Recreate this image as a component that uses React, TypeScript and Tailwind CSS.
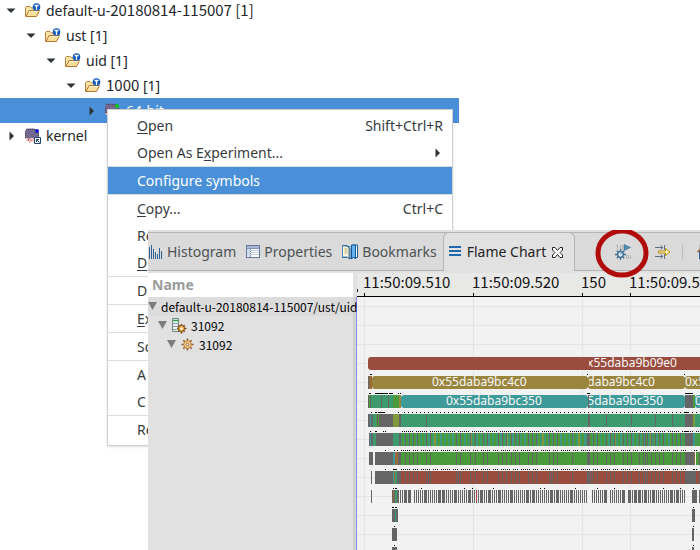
import type { ReactNode } from "react";

const GRAY = "#656565";
const RED = "#9a4d3f";
const OLIVE = "#9a853f";
const TEAL = "#3d9a99";
const GREEN = "#3d9a6d";
const LEAF = "#4a9a3b";
const LIME = "#7f9a3c";
const BROWN = "#9a6c3c";

type Span = [number, number, string];

function TraceFolderIcon() {
  return (
    <svg className="h-4 w-4 shrink-0" viewBox="0 0 16 16" aria-hidden="true">
      <path d="M.5 13.500V4.500l1-1h3.500l1.500 1.500h5v3" fill="#fbe5a8" stroke="#b9803a" />
      <path d="M1 13.500 4 7.500h10.500l-3 6z" fill="#fbdf9c" stroke="#b27830" strokeLinejoin="round" />
      <path d="M4.500 8.500h9" stroke="#fff3cf" />
      <circle cx="11.500" cy="4" r="3.800" fill="#1259bd" />
      <path d="M9.500 2.500h4M11.500 2.500v4.500" stroke="#fff" strokeWidth="1.300" />
    </svg>
  );
}

function TraceIcon({ dot, link }: { dot: string; link?: boolean }) {
  return (
    <svg className="h-4 w-4 shrink-0" viewBox="0 0 16 16" aria-hidden="true">
      <path d="M0 3 2 .5h7l3.500 2 1.500 3v4l-3 1.500-2-1-1 1.500-2.500-1L2 11 0 9z" fill="#75688f" />
      <path d="M1 1.500h10M.5 5v5M13.500 5v5" stroke="#4a4258" strokeDasharray="1 1" />
      <path d="M0 10h3v1h2v-1h4v4H8v-1H6v2H4v-2H2z" fill="#efb9b4" />
      <path d="M3 11h1v2H3zM6 12h1v1H6z" fill="#a05a60" />
      <circle cx="12" cy="3" r="2" fill={dot} />
      {link && (
        <>
          <path d="M9.500 9.500h6v6h-6z" fill="#fff" stroke="#1d4372" />
          <path d="M11.500 14v-2.500H14M11.500 11.500l3 3" stroke="#1d4372" fill="none" />
        </>
      )}
    </svg>
  );
}

function Arrow({ open }: { open?: boolean }) {
  return (
    <svg className="h-3 w-3 shrink-0" viewBox="0 0 12 12" aria-hidden="true">
      <path d={open ? "M1.500 3.500h9L6 8z" : "M4.500 1.500v9L9 6z"} fill="#2e3436" />
    </svg>
  );
}

function Num({ children }: { children: string }) {
  return <span className="font-['Noto_Sans_CJK_SC',sans-serif] text-[15px]">{children}</span>;
}

function TreeRow({ indent, open, selected, icon, children }: { indent: string; open?: boolean; selected?: boolean; icon: ReactNode; children: ReactNode }) {
  return (
    <li
      role="treeitem"
      aria-expanded={!!open}
      className={`flex h-[25px] w-[459px] items-center whitespace-pre ${indent} ${selected ? "bg-[#4a90d9] text-white" : ""}`}
    >
      <Arrow open={open} />
      <span className="ml-2 mr-[5px] flex">{icon}</span>
      <span>{children}</span>
    </li>
  );
}

function MenuItem({ children, shortcut, active, submenu }: { children: ReactNode; shortcut?: string; active?: boolean; submenu?: boolean }) {
  return (
    <button
      role="menuitem"
      type="button"
      className={`flex h-[27px] w-full items-center justify-between pl-[29px] pr-[9px] text-left whitespace-pre ${active ? "bg-[#4a90d9] text-white" : ""}`}
    >
      <span>{children}</span>
      {shortcut && <span>{shortcut}</span>}
      {submenu && <Arrow />}
    </button>
  );
}

function Key({ children }: { children: string }) {
  return <span className="underline decoration-1 underline-offset-2">{children}</span>;
}

function Separator() {
  return <div role="separator" className="h-px bg-[#dcdcdc]" />;
}

function ContextMenu() {
  return (
    <div role="menu" className="absolute left-[107px] top-[109px] w-[346px] border border-[#cfcfcf] bg-white py-[2px] text-[#363c3e] shadow-sm">
      <MenuItem shortcut="Shift+Ctrl+R"><Key>O</Key>pen</MenuItem>
      <MenuItem submenu>Open As E<Key>x</Key>periment...</MenuItem>
      <Separator />
      <MenuItem active>Configure symbols</MenuItem>
      <Separator />
      <MenuItem shortcut="Ctrl+C"><Key>C</Key>opy...</MenuItem>
      <MenuItem>Re</MenuItem>
      <MenuItem><Key>D</Key></MenuItem>
      <Separator />
      <MenuItem>D</MenuItem>
      <Separator />
      <MenuItem><Key>E</Key>x</MenuItem>
      <Separator />
      <MenuItem>So</MenuItem>
      <Separator />
      <MenuItem>A</MenuItem>
      <MenuItem>C</MenuItem>
      <Separator />
      <MenuItem>Re</MenuItem>
    </div>
  );
}

function HistogramIcon() {
  return (
    <svg className="h-4 w-[15px] shrink-0" viewBox="0 0 15 16" shapeRendering="crispEdges" aria-hidden="true">
      <path d="M1.500 3v12M3.500 1v14M5.500 5v10M7.500 8v7M9.500 10v5M11.500 4v11M13.500 7v8" stroke="#2c5f94" />
    </svg>
  );
}

function PropertiesIcon() {
  return (
    <svg className="h-[14px] w-[14px] shrink-0" viewBox="0 0 14 14" shapeRendering="crispEdges" aria-hidden="true">
      <path d="M.5 .5h13v12H.5z" fill="#fff" stroke="#64779f" />
      <path d="M1 1h12v2H1z" fill="#a9b8d8" />
      <path d="M1 3h4v9H1z" fill="#dfe6f3" />
      <path d="M1 3.500h12M4.500 3v9" stroke="#8295bd" />
      <path d="M1 5.500h12M1 7.500h12M1 9.500h12" stroke="#c3cde2" />
    </svg>
  );
}

function BookmarksIcon() {
  return (
    <svg className="h-4 w-4 shrink-0" viewBox="0 0 16 16" aria-hidden="true">
      <path d="M.5 1.500h4.500l3 2 2.500-2.500h5v12.500H10l-2 1.500-2-1.500H.5z" fill="#fff" stroke="#1e5b8f" />
      <path d="M.5 2v11h5l1.500 1.500V4L5 2z" fill="#fdf7df" stroke="#4d87b2" />
      <path d="M2.500 5h3M2.500 7h3M2.500 9h3" stroke="#b9a868" />
      <path d="M9.500 1h4v14l-2-2-2 2z" fill="#61b5f3" stroke="#12589c" />
      <path d="M8 4v11" stroke="#12466f" />
    </svg>
  );
}

function CloseIcon() {
  return (
    <svg className="h-[11px] w-[11px] shrink-0" viewBox="0 0 11 11" aria-hidden="true">
      <path d="M.5.5h2.500l2.500 3 2.500-3h2.500v2.500L8 5.500l2.500 2.500v2.500H8l-2.500-3-2.500 3H.5V8L3 5.500.5 3z" fill="#fff" stroke="#222" />
    </svg>
  );
}

function SymbolsIcon() {
  return (
    <svg className="h-4 w-4" viewBox="0 0 16 16" aria-hidden="true">
      <path d="M1 1.500h1.500v4M5.500 1.500h2v4h-2zM11.500 11.500h2v3h-2zM15.500 11v4" fill="none" stroke="#b4b4b4" />
      <path d="M9 .5v6L15.500 3.500z" fill="#4d8bb0" stroke="#2a6288" strokeWidth=".5" />
      <path d="M5.500 5v11M0 10.500h11M1.800 6.800l7.400 7.400M9.200 6.800l-7.400 7.400" stroke="#3d6c90" strokeWidth="1.300" />
      <circle cx="5.500" cy="10.500" r="2.800" fill="#d8ecf6" stroke="#3d6c90" strokeWidth="1.300" />
      <path d="m5.500 10.500 2-2" stroke="#4a90b8" />
    </svg>
  );
}

function AlignIcon() {
  return (
    <svg className="h-4 w-4" viewBox="0 0 16 16" aria-hidden="true">
      <path d="M0 3.500h8M5.500 1.500l2.500 2-2.500 2M9.500 1v5M0 12.500h8M5.500 10.500l2.500 2-2.500 2M9.500 10v5" stroke="#5b7389" fill="none" />
      <path d="M3.500 7h7V4.500L15 8l-4.500 3.500V9h-7z" fill="#fff0b0" stroke="#c08d15" />
    </svg>
  );
}

function HomeIcon() {
  return (
    <svg className="h-4 w-4" viewBox="0 0 16 16" aria-hidden="true">
      <path d="M2.500 7v8h11V7L8 2z" fill="#e6f0fa" stroke="#315f96" />
      <path d="M.5 8 8 1l7.500 7M3.500 5V1" fill="none" stroke="#a55b2b" strokeWidth="1.500" />
    </svg>
  );
}

function GearIcon() {
  return (
    <svg className="h-[13px] w-[13px] shrink-0" viewBox="0 0 13 13" aria-hidden="true">
      <path d="M6.500.5v12M.5 6.500h12M2.300 2.300l8.400 8.400M10.700 2.300l-8.400 8.400" stroke="#94592d" strokeWidth="1.600" />
      <circle cx="6.500" cy="6.500" r="3.800" fill="#f8d88c" stroke="#b87937" />
      <circle cx="6.500" cy="6.500" r="1.500" fill="#fff" stroke="#94592d" />
    </svg>
  );
}

function ProcessIcon() {
  return (
    <svg className="h-4 w-4 shrink-0" viewBox="0 0 16 16" aria-hidden="true">
      <path d="M1.500.5h6v13h-6z" fill="#eef4ee" stroke="#718879" />
      <path d="M2 2.500h5" stroke="#27a34b" strokeWidth="1.500" />
      <path d="M2 5.500h5M2 8.500h5M2 11.500h4" stroke="#8397b5" />
      <path d="M10.500 6v9.500M6 10.500h9.500M7.300 7.300l6.400 6.400M13.700 7.300l-6.400 6.400" stroke="#744414" strokeWidth="1.600" />
      <circle cx="10.500" cy="10.500" r="3" fill="#f3b13b" stroke="#84501b" />
      <circle cx="10.500" cy="10.500" r="1.200" fill="#fff" />
    </svg>
  );
}

function Tab({ icon, children }: { icon: ReactNode; children: ReactNode }) {
  return (
    <button role="tab" type="button" className="flex items-center gap-1 border-b border-[#b4b4b4] text-[#4c5254]">
      {icon}
      {children}
    </button>
  );
}

function TabBar() {
  return (
    <div className="flex h-[39px] border-t border-[#b4b4b4] bg-[#dadada]">
      <div role="tablist" className="flex">
        <Tab icon={<HistogramIcon />}>Histogram</Tab>
        <span className="w-[10px] border-b border-[#b4b4b4]" />
        <Tab icon={<PropertiesIcon />}>Properties</Tab>
        <span className="w-[10px] border-b border-[#b4b4b4]" />
        <Tab icon={<BookmarksIcon />}>Bookmarks</Tab>
        <span className="w-[6px] border-b border-[#b4b4b4]" />
        <button role="tab" aria-selected="true" type="button" className="-mt-px flex w-[132px] items-center rounded-t-md border border-b-0 border-[#b4b4b4] bg-[#e1e1e1] pl-[5px] text-[#1f2324]">
          <svg className="h-3 w-3 shrink-0" viewBox="0 0 12 12" shapeRendering="crispEdges" aria-hidden="true">
            <path d="M0 0h12v2H0zM0 4h12v2H0zM0 8h12v2H0z" fill="#1f68ab" />
          </svg>
          <span className="ml-[6px] mr-[6px] whitespace-pre">Flame Chart</span>
          <CloseIcon />
        </button>
      </div>
      <div className="flex grow items-center overflow-hidden border-b border-[#b4b4b4] pl-10">
        <button type="button" aria-label="Configure how the addresses are mapped to function names" className="shrink-0"><SymbolsIcon /></button>
        <button type="button" aria-label="Align views" className="ml-6 shrink-0"><AlignIcon /></button>
        <span className="ml-[11px] h-4 w-px shrink-0 bg-[#bcbcbc]" />
        <button type="button" aria-label="Reset the time scale" className="ml-[14px] shrink-0"><HomeIcon /></button>
      </div>
    </div>
  );
}

function SmallArrow() {
  return (
    <svg className="h-[9px] w-[9px] shrink-0" viewBox="0 0 9 9" aria-hidden="true">
      <path d="M0 0h9L4.500 8z" fill="#7d7d7d" />
    </svg>
  );
}

function EntryTree() {
  return (
    <div className="flex w-[205px] shrink-0 flex-col">
      <div className="h-6 bg-white pl-1 font-bold leading-6 text-[#9a9c9c]">Name</div>
      <ul role="tree" className="relative z-10 grow bg-[#e1e1e1] font-['Noto_Sans_CJK_SC',sans-serif] text-[12px] leading-[18px] whitespace-pre text-black">
        <li role="treeitem" className="flex h-[19px] items-center gap-1 bg-[#dcdcdc]"><SmallArrow />default-u-20180814-115007/ust/uid</li>
        <li role="treeitem" className="flex h-[19px] items-center gap-1 pl-[10px]"><SmallArrow /><ProcessIcon />31092</li>
        <li role="treeitem" className="flex h-[19px] items-center gap-[5px] pl-[19px]"><SmallArrow /><GearIcon />31092</li>
      </ul>
    </div>
  );
}

const TICKS = [364, 473, 582, 630];
const TICK_LABELS = ["11:50:09.510", "11:50:09.520", "150", "11:50:09.5"];
const GRID_ROWS = Array.from({ length: 13 }, (_, i) => 306 + i * 19);

const CALLS = [405, 409, 413, 417, 426, 430, 456, 460, 470, 475, 483, 487, 498, 502, 506, 511, 515, 519, 528, 532, 536, 549, 553, 557, 572, 593, 597, 606, 610, 614, 623, 627, 631, 639, 643, 645, 647, 651, 655, 659, 663, 672, 676, 680];
const callSpans: Span[] = CALLS.map((x): Span => [x, 1, GRAY]);

const striped: Span[] = [];
for (let x = 402; x < 685; x += 4) {
  if (x > 584 && x < 590) continue;
  striped.push([x, 2, x % 36 < 4 ? LIME : LEAF]);
  if (x % 12 === 6) striped.push([x + 2, 2, "#3d9a85"]);
}

const fine: Span[] = [];
for (let x = 400; x < 686; x += 2) {
  if (x === 412 || x === 588 || x === 590 || x === 608 || x === 626) continue;
  fine.push([x, 1, GRAY]);
}
const blocks = [404, 408, 424, 438, 442, 454, 468, 480, 488, 498, 510, 526, 532, 550, 556, 570, 604, 622, 628, 634, 638, 644, 652, 670, 676];
blocks.forEach((x) => fine.push([x, 3, GRAY]));

const FLAME_ROWS: { y: number; spans: Span[] }[] = [
  { y: 376, spans: [[368, 1, GRAY], [369, 3, BROWN]] },
  { y: 395, spans: [[368, 1, GRAY], [369, 2, LEAF], [370, 1, GRAY], [371, 22, GREEN], [381, 1, GRAY], [388, 1, GRAY], [393, 6, LEAF], [399, 2, OLIVE], [588, 2, GRAY], [685, 8, GRAY], [693, 2, LEAF]] },
  { y: 414, spans: [[368, 2, GRAY], [370, 1, TEAL], [371, 2, GRAY], [373, 3, GREEN], [376, 3, LEAF], [377, 1, GRAY], [379, 14, GRAY], [393, 6, LIME], [399, 2, GRAY], [401, 284, GREEN], [426, 1, GRAY], [588, 2, GRAY], [606, 1, GRAY], [631, 1, GRAY], [655, 1, GRAY], [672, 1, GRAY], [685, 8, GRAY], [693, 2, LIME], [695, 5, GREEN]] },
  { y: 433, spans: [[369, 2, GRAY], [370, 1, TEAL], [371, 2, GRAY], [373, 3, GREEN], [376, 17, GRAY], [393, 6, GREEN], [399, 2, GRAY], [401, 284, GREEN], ...striped, ...callSpans, [587, 3, GRAY], [685, 8, GRAY], [693, 2, TEAL], [695, 5, LEAF], [697, 1, GREEN]] },
  { y: 452, spans: [[369, 4, GRAY], [375, 18, GRAY], [393, 2, TEAL], [395, 3, BROWN], [398, 3, GRAY], [401, 284, LEAF], ...callSpans, [587, 3, GRAY], [685, 9, GRAY], [694, 1, BROWN], [696, 3, LEAF], [699, 1, GRAY]] },
  { y: 471, spans: [[371, 1, GRAY], [375, 18, GRAY], [393, 1, TEAL], [394, 1, BROWN], [395, 2, GREEN], [397, 4, GRAY], [401, 284, RED], ...callSpans, [428, 1, GRAY], [458, 1, GRAY], [551, 1, GRAY], [587, 3, GRAY], [591, 1, GRAY], [685, 11, GRAY], [696, 3, RED], [699, 1, GRAY]] },
  { y: 490, spans: [[371, 1, GRAY], [392, 7, GRAY], [393, 1, BROWN], [395, 2, GREEN], ...fine, [476, 1, "#a83f3b"], [692, 5, GRAY], [699, 1, GRAY]] },
  { y: 509, spans: [[392, 6, GRAY], [395, 1, GREEN], [692, 3, GRAY]] },
  { y: 528, spans: [[392, 5, GRAY], [692, 2, GRAY]] },
  { y: 547, spans: [[392, 5, GRAY], [692, 2, GRAY]] },
];

function FlameChart() {
  return (
    <svg className="h-[277px] w-[343px] shrink-0" viewBox="357 273 343 277" role="img" aria-label="Flame chart">
      <defs>
        <clipPath id="left-of-view"><path d="M589 340h111v80H589z" /></clipPath>
      </defs>
      <g shapeRendering="crispEdges">
        <path d="M357 273h343v23H357z" fill="#e8e8e7" />
        <path d="M357 297h343v253H357z" fill="#f2f2f2" />
        {GRID_ROWS.map((y) => <path key={y} d={`M357 ${y}h343v1H357z`} fill="#e4e4e4" />)}
        {TICKS.map((x) => <path key={x} d={`M${x} 297h1v253h-1z`} fill="#e4e4e4" />)}
        <path d="M357 296h343v1H357z" fill="#000" />
        <path d="M357 289h1v3h-1z" fill="#000" />
        {TICKS.map((x) => <path key={x} d={`M${x} 293h1v3h-1z`} fill="#000" />)}
        {FLAME_ROWS.map((row) => row.spans.map(([x, w, color], i) => (
          <rect key={`${row.y}-${i}`} x={x} y={row.y} width={w} height="13" fill={color} />
        )))}
        <g stroke="#000" strokeWidth="1">
          <path d="M370 374.500h2M587 374.500h1M684 374.500h1M369 393.500h2M375 393.500h13M389 393.500h4M398 393.500h1M400 393.500h1M587 393.500h3M685 393.500h8" />
          <path d="M371 412.500h1M375 412.500h2M378 412.500h7M398 412.500h1M685 412.500h3M370 431.500h1M375 431.500h2M383 431.500h1M385 431.500h1M685 431.500h3" />
          <path d="M404 412.500H700" strokeDasharray="1 3" />
          <path d="M402 431.500H700" strokeDasharray="1 1 1 1 1 1 1 1 1 1 1 3" />
          <path d="M401 450.500H686M401 469.500H686" strokeDasharray="1 1 1 1 1 1 1 1 1 3 1 1 1 1 1 3" />
          <path d="M385 450.500h1M394 450.500h1M397 450.500h1M385 469.500h1M393 469.500h4M693 469.500h2M696 469.500h1M694 450.500h1M696 450.500h1" />
          <path d="M393 488.500h1M395 488.500h2M421 488.500h1M464 488.500h1M472 488.500h1M493 488.500h1M540 488.500h1M544 488.500h1M575 488.500h1M597 488.500h1M614 488.500h1M663 488.500h1M680 488.500h1M693 488.500h1" />
          <path d="M392 507.500h2M395 507.500h2M693 507.500h1M394 526.500h1M693 526.500h1M394 545.500h1M693 545.500h1" />
        </g>
      </g>
      <rect x="368" y="357" width="340" height="13" rx="3" fill={RED} />
      <rect x="372" y="376" width="216" height="13" rx="3" fill={OLIVE} />
      <rect x="588" y="376" width="97" height="13" rx="3" fill={OLIVE} />
      <rect x="685" y="376" width="30" height="13" rx="3" fill={OLIVE} />
      <rect x="401" y="395" width="187" height="13" rx="3" fill={TEAL} />
      <rect x="589" y="395" width="96" height="13" rx="3" fill={TEAL} />
      <rect x="695" y="395" width="30" height="13" rx="3" fill={TEAL} />
      <g className="font-['Noto_Sans_CJK_SC',sans-serif] text-[15px]" fill="#111">
        {TICKS.map((x, i) => <text key={x} x={x - 1} y="288">{TICK_LABELS[i]}</text>)}
      </g>
      <g className="text-[12px]" fill="#f8f8f8">
        <text x="432" y="386">0x55daba9bc4c0</text>
        <text x="446" y="405">0x55daba9bc350</text>
        <text x="685" y="386">0x55daba9bc4c0</text>
        <text x="695" y="405">0x55daba9bc350</text>
        <g clipPath="url(#left-of-view)" textAnchor="end">
          <text x="677" y="367">0x55daba9b09e0</text>
          <text x="655" y="386">0x55daba9bc4c0</text>
          <text x="663" y="405">0x55daba9bc350</text>
        </g>
      </g>
    </svg>
  );
}

function FlameWindow() {
  return (
    <section className="absolute bottom-0 left-[148px] right-0 top-[230px] overflow-hidden bg-[#e1e1e1] pt-[2px]">
      <TabBar />
      <div className="flex h-full pt-[2px]">
        <EntryTree />
        <div className="mt-6 w-[3px] shrink-0 bg-[#d0d0d0]" />
        <div className="mt-6 w-px shrink-0 bg-[#8c8cf5]" />
        <FlameChart />
      </div>
      <svg className="pointer-events-none absolute left-[447px] top-0 h-12 w-[54px]" viewBox="0 0 54 48" aria-hidden="true">
        <ellipse cx="27" cy="23" rx="24" ry="22" fill="none" stroke="#b00c0c" strokeWidth="5" />
      </svg>
    </section>
  );
}

export default function App() {
  return (
    <main className="relative min-h-screen w-full overflow-hidden bg-white font-['Noto_Sans',sans-serif] text-[14px] leading-5 text-[#222628]">
      <ul role="tree" className="-mt-[2px]">
        <TreeRow indent="pl-[5px]" open icon={<TraceFolderIcon />}>default-u-<Num>20180814-115007 [1]</Num></TreeRow>
        <TreeRow indent="pl-[25px]" open icon={<TraceFolderIcon />}>ust [1]</TreeRow>
        <TreeRow indent="pl-[45px]" open icon={<TraceFolderIcon />}>uid [1]</TreeRow>
        <TreeRow indent="pl-[65px]" open icon={<TraceFolderIcon />}><Num>1000</Num> [1]</TreeRow>
        <TreeRow indent="pl-[85px]" selected icon={<TraceIcon dot="#08c808" />}>64-bit</TreeRow>
        <TreeRow indent="pl-[5px]" icon={<TraceIcon dot="#0c0cc8" link />}>kernel</TreeRow>
      </ul>
      <ContextMenu />
      <FlameWindow />
    </main>
  );
}
